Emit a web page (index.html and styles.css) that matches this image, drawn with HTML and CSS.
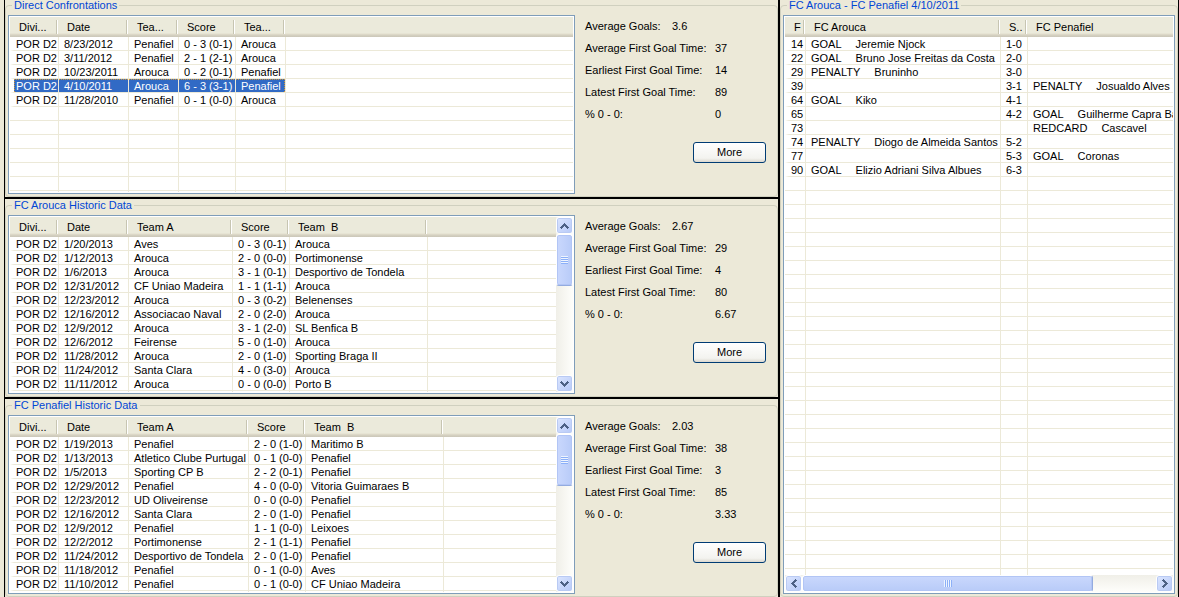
FILE: index.html
```html
<!DOCTYPE html>
<html lang="en">
<head>
<meta charset="utf-8">
<title>Direct Confrontations</title>
<link rel="stylesheet" href="styles.css">
</head>
<body>
<svg class="sprite" width="0" height="0" aria-hidden="true">
  <symbol id="arrow-up" viewBox="0 0 9 6"><path d="M4 0h1v1h1v1h1v1h1v1h1v1h-1v1h-1v-1h-1v-1h-1v-1h-1v1h-1v1h-1v1h-1v-1h-1v-1h1v-1h1v-1h1v-1h1z"/></symbol>
  <symbol id="arrow-down" viewBox="0 0 9 6"><path d="M4 6h1v-1h1v-1h1v-1h1v-1h1v-1h-1v-1h-1v1h-1v1h-1v1h-1v-1h-1v-1h-1v-1h-1v1h-1v1h1v1h1v1h1v1h1z"/></symbol>
  <symbol id="arrow-left" viewBox="0 0 6 9"><path d="M0 4v1h1v1h1v1h1v1h1v1h1v-1h1v-1h-1v-1h-1v-1h-1v-1h1v-1h1v-1h1v-1h-1v-1h-1v1h-1v1h-1v1h-1v1z"/></symbol>
  <symbol id="arrow-right" viewBox="0 0 6 9"><path d="M6 4v1h-1v1h-1v1h-1v1h-1v1h-1v-1h-1v-1h1v-1h1v-1h1v-1h-1v-1h-1v-1h-1v-1h1v-1h1v1h1v1h1v1h1v1z"/></symbol>
</svg>
<main class="app">
  <div class="column">
    <section class="panel">
    <fieldset class="group">
      <legend>Direct Confrontations</legend>
      <div class="group-body">
        <div class="list">
          <div class="list-view">
            <table>
              <colgroup><col class="w-49"><col class="w-70"><col class="w-50"><col class="w-57"><col class="w-50"><col></colgroup>
              <thead><tr><th>Divi...</th><th>Date</th><th>Tea...</th><th>Score</th><th>Tea...</th><th></th></tr></thead>
              <tbody>
                <tr><td>POR D2</td><td>8/23/2012</td><td>Penafiel</td><td>0 - 3 (0-1)</td><td>Arouca</td><td></td></tr>
                <tr><td>POR D2</td><td>3/11/2012</td><td>Penafiel</td><td>2 - 1 (2-1)</td><td>Arouca</td><td></td></tr>
                <tr><td>POR D2</td><td>10/23/2011</td><td>Arouca</td><td>0 - 2 (0-1)</td><td>Penafiel</td><td></td></tr>
                <tr class="selected"><td>POR D2</td><td>4/10/2011</td><td>Arouca</td><td>6 - 3 (3-1)</td><td>Penafiel</td><td></td></tr>
                <tr><td>POR D2</td><td>11/28/2010</td><td>Penafiel</td><td>0 - 1 (0-0)</td><td>Arouca</td><td></td></tr>
                <tr class="fill"><td></td><td></td><td></td><td></td><td></td><td></td></tr>
              </tbody>
            </table>
          </div>
        </div>
        <div class="side">
          <dl class="stats">
            <div><dt class="short">Average Goals:</dt><dd>3.6</dd></div>
            <div><dt>Average First Goal Time:</dt><dd>37</dd></div>
            <div><dt>Earliest First Goal Time:</dt><dd>14</dd></div>
            <div><dt>Latest First Goal Time:</dt><dd>89</dd></div>
            <div><dt>% 0 - 0:</dt><dd>0</dd></div>
          </dl>
          <button class="more" type="button">More</button>
        </div>
      </div>
    </fieldset>
    </section>

    <section class="panel">
    <fieldset class="group">
      <legend>FC Arouca Historic Data</legend>
      <div class="group-body">
        <div class="list">
          <div class="list-view">
            <table>
              <colgroup><col class="w-49"><col class="w-70"><col class="w-104"><col class="w-57"><col class="w-138"><col></colgroup>
              <thead><tr><th>Divi...</th><th>Date</th><th>Team A</th><th>Score</th><th>Team&nbsp; B</th><th></th></tr></thead>
              <tbody>
                <tr><td>POR D2</td><td>1/20/2013</td><td>Aves</td><td>0 - 3 (0-1)</td><td>Arouca</td><td></td></tr>
                <tr><td>POR D2</td><td>1/12/2013</td><td>Arouca</td><td>2 - 0 (0-0)</td><td>Portimonense</td><td></td></tr>
                <tr><td>POR D2</td><td>1/6/2013</td><td>Arouca</td><td>3 - 1 (0-1)</td><td>Desportivo de Tondela</td><td></td></tr>
                <tr><td>POR D2</td><td>12/31/2012</td><td>CF Uniao Madeira</td><td>1 - 1 (1-1)</td><td>Arouca</td><td></td></tr>
                <tr><td>POR D2</td><td>12/23/2012</td><td>Arouca</td><td>0 - 3 (0-2)</td><td>Belenenses</td><td></td></tr>
                <tr><td>POR D2</td><td>12/16/2012</td><td>Associacao Naval</td><td>2 - 0 (2-0)</td><td>Arouca</td><td></td></tr>
                <tr><td>POR D2</td><td>12/9/2012</td><td>Arouca</td><td>3 - 1 (2-0)</td><td>SL Benfica B</td><td></td></tr>
                <tr><td>POR D2</td><td>12/6/2012</td><td>Feirense</td><td>5 - 0 (1-0)</td><td>Arouca</td><td></td></tr>
                <tr><td>POR D2</td><td>11/28/2012</td><td>Arouca</td><td>2 - 0 (1-0)</td><td>Sporting Braga II</td><td></td></tr>
                <tr><td>POR D2</td><td>11/24/2012</td><td>Santa Clara</td><td>4 - 0 (3-0)</td><td>Arouca</td><td></td></tr>
                <tr><td>POR D2</td><td>11/11/2012</td><td>Arouca</td><td>0 - 0 (0-0)</td><td>Porto B</td><td></td></tr>
                <tr class="fill"><td></td><td></td><td></td><td></td><td></td><td></td></tr>
              </tbody>
            </table>
          </div>
          <div class="scrollbar vertical">
            <button type="button" class="arrow" aria-label="Scroll up"><svg width="9" height="6"><use href="#arrow-up"/></svg></button>
            <div class="thumb"><span class="grip"></span></div>
            <button type="button" class="arrow end" aria-label="Scroll down"><svg width="9" height="6"><use href="#arrow-down"/></svg></button>
          </div>
        </div>
        <div class="side">
          <dl class="stats">
            <div><dt class="short">Average Goals:</dt><dd>2.67</dd></div>
            <div><dt>Average First Goal Time:</dt><dd>29</dd></div>
            <div><dt>Earliest First Goal Time:</dt><dd>4</dd></div>
            <div><dt>Latest First Goal Time:</dt><dd>80</dd></div>
            <div><dt>% 0 - 0:</dt><dd>6.67</dd></div>
          </dl>
          <button class="more" type="button">More</button>
        </div>
      </div>
    </fieldset>
    </section>

    <section class="panel">
    <fieldset class="group">
      <legend>FC Penafiel Historic Data</legend>
      <div class="group-body">
        <div class="list">
          <div class="list-view">
            <table>
              <colgroup><col class="w-49"><col class="w-70"><col class="w-120"><col class="w-57"><col class="w-138"><col></colgroup>
              <thead><tr><th>Divi...</th><th>Date</th><th>Team A</th><th>Score</th><th>Team&nbsp; B</th><th></th></tr></thead>
              <tbody>
                <tr><td>POR D2</td><td>1/19/2013</td><td>Penafiel</td><td>2 - 0 (1-0)</td><td>Maritimo B</td><td></td></tr>
                <tr><td>POR D2</td><td>1/13/2013</td><td>Atletico Clube Purtugal</td><td>0 - 1 (0-0)</td><td>Penafiel</td><td></td></tr>
                <tr><td>POR D2</td><td>1/5/2013</td><td>Sporting CP B</td><td>2 - 2 (0-1)</td><td>Penafiel</td><td></td></tr>
                <tr><td>POR D2</td><td>12/29/2012</td><td>Penafiel</td><td>4 - 0 (0-0)</td><td>Vitoria Guimaraes B</td><td></td></tr>
                <tr><td>POR D2</td><td>12/23/2012</td><td>UD Oliveirense</td><td>0 - 0 (0-0)</td><td>Penafiel</td><td></td></tr>
                <tr><td>POR D2</td><td>12/16/2012</td><td>Santa Clara</td><td>2 - 0 (1-0)</td><td>Penafiel</td><td></td></tr>
                <tr><td>POR D2</td><td>12/9/2012</td><td>Penafiel</td><td>1 - 1 (0-0)</td><td>Leixoes</td><td></td></tr>
                <tr><td>POR D2</td><td>12/2/2012</td><td>Portimonense</td><td>2 - 1 (1-1)</td><td>Penafiel</td><td></td></tr>
                <tr><td>POR D2</td><td>11/24/2012</td><td>Desportivo de Tondela</td><td>2 - 0 (1-0)</td><td>Penafiel</td><td></td></tr>
                <tr><td>POR D2</td><td>11/18/2012</td><td>Penafiel</td><td>0 - 1 (0-0)</td><td>Aves</td><td></td></tr>
                <tr><td>POR D2</td><td>11/10/2012</td><td>Penafiel</td><td>0 - 1 (0-0)</td><td>CF Uniao Madeira</td><td></td></tr>
                <tr class="fill"><td></td><td></td><td></td><td></td><td></td><td></td></tr>
              </tbody>
            </table>
          </div>
          <div class="scrollbar vertical">
            <button type="button" class="arrow" aria-label="Scroll up"><svg width="9" height="6"><use href="#arrow-up"/></svg></button>
            <div class="thumb"><span class="grip"></span></div>
            <button type="button" class="arrow end" aria-label="Scroll down"><svg width="9" height="6"><use href="#arrow-down"/></svg></button>
          </div>
        </div>
        <div class="side">
          <dl class="stats">
            <div><dt class="short">Average Goals:</dt><dd>2.03</dd></div>
            <div><dt>Average First Goal Time:</dt><dd>38</dd></div>
            <div><dt>Earliest First Goal Time:</dt><dd>3</dd></div>
            <div><dt>Latest First Goal Time:</dt><dd>85</dd></div>
            <div><dt>% 0 - 0:</dt><dd>3.33</dd></div>
          </dl>
          <button class="more" type="button">More</button>
        </div>
      </div>
    </fieldset>
    </section>
  </div>

  <div class="column">
    <section class="panel">
    <fieldset class="group">
      <legend>FC Arouca - FC Penafiel 4/10/2011</legend>
      <div class="group-body">
        <div class="list events">
          <div class="list-view">
            <table>
              <colgroup><col class="w-21"><col class="w-195"><col class="w-27"><col></colgroup>
              <thead><tr><th>F</th><th>FC Arouca</th><th>S..</th><th>FC Penafiel</th></tr></thead>
              <tbody>
                <tr><td>14</td><td><span class="kind">GOAL</span>Jeremie Njock</td><td>1-0</td><td></td></tr>
                <tr><td>22</td><td><span class="kind">GOAL</span>Bruno Jose Freitas da Costa</td><td>2-0</td><td></td></tr>
                <tr><td>29</td><td><span class="kind">PENALTY</span>Bruninho</td><td>3-0</td><td></td></tr>
                <tr><td>39</td><td></td><td>3-1</td><td><span class="kind">PENALTY</span>Josualdo Alves l</td></tr>
                <tr><td>64</td><td><span class="kind">GOAL</span>Kiko</td><td>4-1</td><td></td></tr>
                <tr><td>65</td><td></td><td>4-2</td><td><span class="kind">GOAL</span>Guilherme Capra Bac</td></tr>
                <tr><td>73</td><td></td><td></td><td><span class="kind">REDCARD</span>Cascavel</td></tr>
                <tr><td>74</td><td><span class="kind">PENALTY</span>Diogo de Almeida Santos</td><td>5-2</td><td></td></tr>
                <tr><td>77</td><td></td><td>5-3</td><td><span class="kind">GOAL</span>Coronas</td></tr>
                <tr><td>90</td><td><span class="kind">GOAL</span>Elizio Adriani Silva Albues</td><td>6-3</td><td></td></tr>
                <tr class="fill"><td></td><td></td><td></td><td></td></tr>
              </tbody>
            </table>
          </div>
          <div class="scrollbar horizontal">
            <button type="button" class="arrow" aria-label="Scroll left"><svg width="6" height="9"><use href="#arrow-left"/></svg></button>
            <div class="thumb"><span class="grip"></span></div>
            <button type="button" class="arrow end" aria-label="Scroll right"><svg width="6" height="9"><use href="#arrow-right"/></svg></button>
          </div>
        </div>
      </div>
    </fieldset>
    </section>
  </div>
</main>
</body>
</html>
```
FILE: styles.css
```css
* { box-sizing: border-box; }

body {
  margin: 0;
  background: #ece9d8;
  color: #000;
  font: 11px/13px "Liberation Sans", Arial, sans-serif;
  overflow: hidden;
}

.sprite { position: absolute; }

/* The black background shows through the gaps as split bars. */
.app {
  display: grid;
  grid-template-columns: minmax(0, 773fr) minmax(0, 398fr);
  gap: 2px;
  height: calc(100vh + 1px);
  margin: -1px 0 0 4px;
  border: solid #000;
  border-width: 0 1px;
  background: #000;
}

.column {
  display: grid;
  grid-auto-rows: minmax(0, 1fr);
  gap: 2px;
  min-height: 0;
}

.panel {
  display: grid;
  grid-template: minmax(0, 1fr) / minmax(0, 1fr);
  min-height: 0;
  background: #ece9d8;
}

/* Group boxes */
.group {
  display: flex;
  flex-direction: column;
  min-width: 0;
  min-height: 0;
  margin: 0;
  padding: 3px 2px 2px;
  border: 1px solid #d0d0bf;
  border-radius: 4px;
}

.group legend {
  margin-left: 4px;
  padding: 0 2px;
  color: #0046d5;
}

.group-body {
  display: flex;
  flex: 1;
  min-height: 0;
}

/* List views */
.list {
  display: flex;
  flex: 1;
  min-width: 0;
  min-height: 0;
  padding: 1px;
  border: 1px solid #7f9db9;
  background: #fff;
}

.list.events { flex-direction: column; }

.list-view {
  flex: 1;
  min-width: 0;
  min-height: 0;
  overflow: hidden;
}

table {
  width: 100%;
  height: 100%;
  table-layout: fixed;
  border-spacing: 0;
}

.w-21 { width: 21px; }
.w-27 { width: 27px; }
.w-49 { width: 49px; }
.w-50 { width: 50px; }
.w-57 { width: 57px; }
.w-70 { width: 70px; }
.w-104 { width: 104px; }
.w-120 { width: 120px; }
.w-138 { width: 138px; }
.w-195 { width: 195px; }

th {
  height: 20px;
  padding: 0 0 0 8px;
  font-weight: normal;
  text-align: left;
  white-space: nowrap;
  background:
    linear-gradient(90deg, #c7c5b2 1px, #fff 1px) right 1px top 3px / 2px 14px no-repeat,
    linear-gradient(#ebeadb 16px, #e2decd 17px, #d6d2c2 18px, #cbc7b8 20px);
}

th:last-child { background: linear-gradient(#ebeadb 16px, #e2decd 17px, #d6d2c2 18px, #cbc7b8 20px); }

td {
  height: 14px;
  padding: 1px 0 0 5px;
  line-height: 12px;
  overflow: hidden;
  white-space: nowrap;
  border: solid #ece9d8;
  border-width: 0 1px 1px 0;
}

td:last-child { border-right: 0; }

th:first-child { padding-left: 9px; }
td:first-child { padding-left: 2px; border-left: 4px solid #fff; }

.fill { height: 100%; }

.fill td,
.fill td:first-child {
  height: auto;
  border-bottom: 0;
  background: repeating-linear-gradient(#fff 0 13px, #ece9d8 13px 14px);
}

.fill td:first-child { border-left: 0; }

/* The selected row carries a dotted focus rectangle. */
.selected td {
  color: #fff;
  background: repeating-linear-gradient(90deg, #ce953a 0 1px, #316ac5 1px 2px) top / 100% 1px no-repeat #316ac5;
}

.selected td:first-child {
  background:
    repeating-linear-gradient(90deg, #ce953a 0 1px, #316ac5 1px 2px) top / 100% 1px no-repeat,
    repeating-linear-gradient(#ce953a 0 1px, #316ac5 1px 2px) left / 1px 100% no-repeat #316ac5;
}

.selected td:nth-last-child(2) {
  background:
    repeating-linear-gradient(90deg, #ce953a 0 1px, #316ac5 1px 2px) top / 100% 1px no-repeat,
    repeating-linear-gradient(#ce953a 0 1px, #316ac5 1px 2px) right / 1px 100% no-repeat #316ac5;
}

.selected td:last-child { background: none; }

.kind { margin-right: 14px; }

/* Scroll bars */
.scrollbar {
  display: flex;
  flex: none;
  background: linear-gradient(90deg, #f0efe8, #fefefb);
}

.vertical { flex-direction: column; width: 17px; }
.horizontal { background: linear-gradient(#f0efe8, #fefefb); height: 17px; }

.arrow {
  display: flex;
  flex: none;
  align-items: center;
  justify-content: center;
  width: 17px;
  height: 17px;
  padding: 0;
  border: 1px solid #fff;
  border-radius: 3px;
  background: linear-gradient(135deg, #dce6ff, #b6c9f8);
  box-shadow: inset 0 0 0 1px #b9caf3;
  fill: #4d6185;
}

.arrow.end { margin-top: auto; }
.horizontal .arrow.end { margin: 0 0 0 auto; }

.thumb {
  display: flex;
  align-items: center;
  justify-content: center;
  border: 1px solid #fff;
  border-radius: 3px;
  box-shadow: inset 0 0 0 1px #b2c5f5;
}

.vertical .thumb { height: 52px; background: linear-gradient(90deg, #cad8fd, #b8cbf8); border-bottom: 1px solid #93abdf; }
.horizontal .thumb { width: 75%; background: linear-gradient(#cad8fd, #b8cbf8); border-right: 1px solid #93abdf; }

.vertical .grip {
  width: 7px;
  height: 8px;
  background: repeating-linear-gradient(#eef4fe 0 1px, #8cb0f8 1px 2px);
}

.horizontal .grip {
  width: 8px;
  height: 7px;
  background: repeating-linear-gradient(90deg, #eef4fe 0 1px, #8cb0f8 1px 2px);
}

/* Statistics */
.side {
  display: flex;
  flex: none;
  flex-direction: column;
  align-items: flex-end;
  width: 200px;
  padding: 0 9px 0 10px;
}

.stats {
  width: 100%;
  margin: 0 0 17px;
}

.stats div {
  display: flex;
  align-items: center;
  height: 22px;
}

dt { width: 130px; }
dt.short { width: 87px; }
dd { margin: 0; }

.more {
  width: 73px;
  height: 21px;
  padding: 0;
  font: inherit;
  color: #000;
  border: 1px solid #003c74;
  border-radius: 3px;
  background: linear-gradient(#fff, #f3f3ef 80%, #dcd8cf);
}
```
